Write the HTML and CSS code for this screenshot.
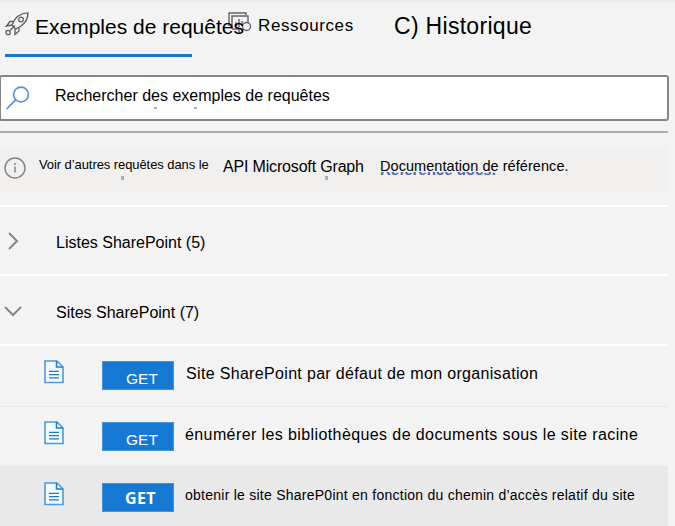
FILE: index.html
```html
<!DOCTYPE html>
<html lang="fr">
<head>
<meta charset="utf-8">
<title>Exemples de requêtes</title>
<link rel="stylesheet" href="styles.css">
</head>
<body>
<svg class="defs" aria-hidden="true">
  <symbol id="doc" viewBox="0 0 20 24"><path d="M1 1h12l6 6v15.5H1z" fill="#f5faff" stroke="#4b9ae0" stroke-width="1.6"/><path d="M12.5 1v6H19" fill="none" stroke="#1d79cf" stroke-width="1.5"/><path d="M5 11.400h10M5 14.600h10M5 17.800h10" stroke="#1d79cf" stroke-width="1.300"/></symbol>
</svg>
<nav class="tabs">
  <div class="tab tab-samples">
    <svg class="rocket" viewBox="0 0 24 24" fill="none" stroke="#625c62" stroke-width="1.3"><path d="M7 13C10 5 16 1 23 .8 23 8 18 14 10.500 17zM7 13l3.500 4M9 9.500H5L1.500 14 7 13M14 15v4l-4 3.500V17"/><circle cx="16" cy="7.500" r="2.300"/><circle cx="3" cy="20.500" r="2.200"/><path d="M5 18.500l5-5"/></svg>
    <span class="samples-label">Exemples de requêtes</span>
  </div>
  <div class="tab tab-resources">
    <svg class="resources-icon" viewBox="0 0 24 23" fill="none" stroke="#69616a" stroke-width="1.400"><path d="M1 14V1h17v2M4 17V4h16v7M4 17h8M4 4v13M8 14v-4M11 15V7M14 14V9M11 16v5"/><circle cx="18.500" cy="14.500" r="4"/></svg>
    <span class="resources-label">Ressources</span>
  </div>
  <div class="tab tab-history"><span class="history-label">C) Historique</span></div>
</nav>
<main class="panel">
  <div class="search">
    <svg class="search-icon" viewBox="0 0 24 24" fill="none" stroke="#5990d4" stroke-width="1.700"><circle cx="15" cy="8.500" r="7.400"/><path d="M9.700 13.800L.7 23"/></svg>
    <span class="search-label">Rechercher des exemples de requêtes</span>
    <i class="speck speck-one"></i><i class="speck speck-two"></i>
  </div>
  <div class="message">
    <svg class="info" viewBox="0 0 22 22" fill="none" stroke="#858585" stroke-width="1.500"><circle cx="11" cy="11" r="10"/><path d="M11 9.500v6M11 6v2"/></svg>
    <span class="more-label">Voir d’autres requêtes dans le</span>
    <span class="api-label">API Microsoft Graph</span>
    <span class="docs"><span class="docs-under" aria-hidden="true"><span class="docs-under-text">Reference docs.</span></span><span class="docs-label">Documentation de référence.</span></span>
    <i class="speck speck-three"></i><i class="speck speck-four"></i>
  </div>
  <div class="group group-lists">
    <svg class="chevron" viewBox="0 0 18 18"><path d="M5 1l8 8-8 8"/></svg>
    <span class="lists-label">Listes SharePoint (5)</span>
  </div>
  <div class="group group-sites">
    <svg class="chevron" viewBox="0 0 18 18"><path d="M1 5l8 8 8-8"/></svg>
    <span class="sites-label">Sites SharePoint (7)</span>
  </div>
  <div class="query query-first">
    <svg class="doc"><use href="#doc"/></svg><span class="method">GET</span><span class="query-one">Site SharePoint par défaut de mon organisation</span>
  </div>
  <div class="query query-second">
    <svg class="doc"><use href="#doc"/></svg><span class="method">GET</span><span class="query-two">énumérer les bibliothèques de documents sous le site racine</span>
  </div>
  <div class="query query-selected">
    <svg class="doc"><use href="#doc"/></svg><span class="method method-selected">GET</span><span class="query-three">obtenir le site ShareP0int en fonction du chemin d’accès relatif du site</span>
  </div>
</main>
</body>
</html>
```
FILE: styles.css
```css
* { box-sizing: border-box; }
body {
  margin: 0;
  height: 526px;
  overflow: hidden;
  background: linear-gradient(#e8e8e8, #f3f3f3 4px) no-repeat #f3f3f3;
  color: #000;
  font-family: "Liberation Sans", Arial, sans-serif;
  white-space: nowrap;
}
span { flex-shrink: 0; }
svg { display: block; flex-shrink: 0; }
.defs { position: absolute; width: 0; height: 0; }
.tabs { display: flex; height: 75px; }
.tab { display: flex; align-items: flex-start; height: 57px; }
.tab-samples { width: 187px; margin-left: 5px; border-bottom: 3px solid #1678d3; }
.rocket { width: 24px; height: 24px; margin-top: 12px; }
.samples-label { margin: 14px 0 0 6px; font-size: 21px; line-height: 26px; position: relative; z-index: 1; }
.tab-resources { width: 164px; margin-left: 36px; }
.resources-icon { width: 24px; height: 23px; margin-top: 12px; }
.resources-label { margin: 14px 0 0 6px; font-size: 17px; line-height: 24px; letter-spacing: .6px; }
.history-label { margin: 12px 0 0 2px; font-size: 23px; line-height: 28px; letter-spacing: .3px; }
.panel { width: 668px; }
.search {
  position: relative;
  display: flex;
  align-items: center;
  width: 670px;
  height: 46px;
  margin-left: -1px;
  padding-left: 5px;
  background: #fff;
  border: 2px solid #858585;
  border-radius: 3px;
}
.search-icon { width: 24px; height: 24px; }
.search-label { margin: -4px 0 0 25px; font-size: 16px; line-height: 24px; }
.message {
  position: relative;
  display: flex;
  height: 60px;
  margin-top: 10px;
  padding-top: 14px;
  border-top: 2px solid #adadad;
  background: linear-gradient(#f3f3f3 13px, #f2f0ef 13px);
}
.info { width: 22px; height: 22px; margin: 10px 0 0 4px; }
.more-label { margin: 7px 0 0 13px; width: 184px; font-size: 13px; line-height: 22px; letter-spacing: -.08px; }
.api-label { margin: 8px 0 0; width: 157px; font-size: 16px; line-height: 24px; letter-spacing: -.17px; }
.docs { position: relative; margin-top: 8px; font-size: 14.500px; line-height: 22px; letter-spacing: .06px; }
.docs-label { position: relative; }
.docs-under { position: absolute; left: 0; top: 17px; height: 5px; overflow: hidden; }
.docs-under-text { display: block; margin-top: -13px; font-size: 15px; font-weight: 700; line-height: 22px; color: #4a66b4; letter-spacing: 0; }
.speck { position: absolute; width: 3px; height: 2px; background: #a5b1c0; }
.speck-one { left: 153px; top: 30px; }
.speck-two { left: 193px; top: 30px; }
.speck-three { left: 121px; top: 43px; height: 4px; }
.speck-four { left: 325px; top: 43px; height: 4px; }
.group { display: flex; align-items: center; height: 70px; border-bottom: 2px solid #fff; }
.group-lists { height: 71px; margin-top: 14px; border-top: 2px solid #fff; }
.chevron { width: 18px; height: 18px; margin: 1px 0 0 4px; fill: none; stroke: #8b8487; stroke-width: 2; }
.lists-label, .sites-label { margin: 4px 0 0 34px; font-size: 16px; line-height: 24px; }
.sites-label { margin-top: 5px; }
.query { display: flex; height: 60px; border-bottom: 1px solid #e8e8e8; }
.query-first { height: 61px; }
.query-selected { height: 61px; padding-top: 1px; background: #e9e9e9; }
.doc { width: 20px; height: 24px; margin: 14px 0 0 44px; }
.method {
  width: 72px;
  height: 29px;
  margin: 15px 0 0 38px;
  padding-left: 23px;
  border: 1px solid #4494dc;
  background: #1579d3;
  color: #fff;
  font-size: 15.500px;
  line-height: 33px;
}
.method-selected { padding-left: 22px; font: 700 16px/29px "Open Sans", sans-serif; letter-spacing: .4px; }
.query-one, .query-two, .query-three { margin: 16px 0 0 12px; font-size: 16px; line-height: 24px; letter-spacing: .33px; }
.query-two { margin-left: 11px; letter-spacing: .4px; }
.query-three { margin: 15px 0 0 11px; font-size: 14px; letter-spacing: .25px; }
```
